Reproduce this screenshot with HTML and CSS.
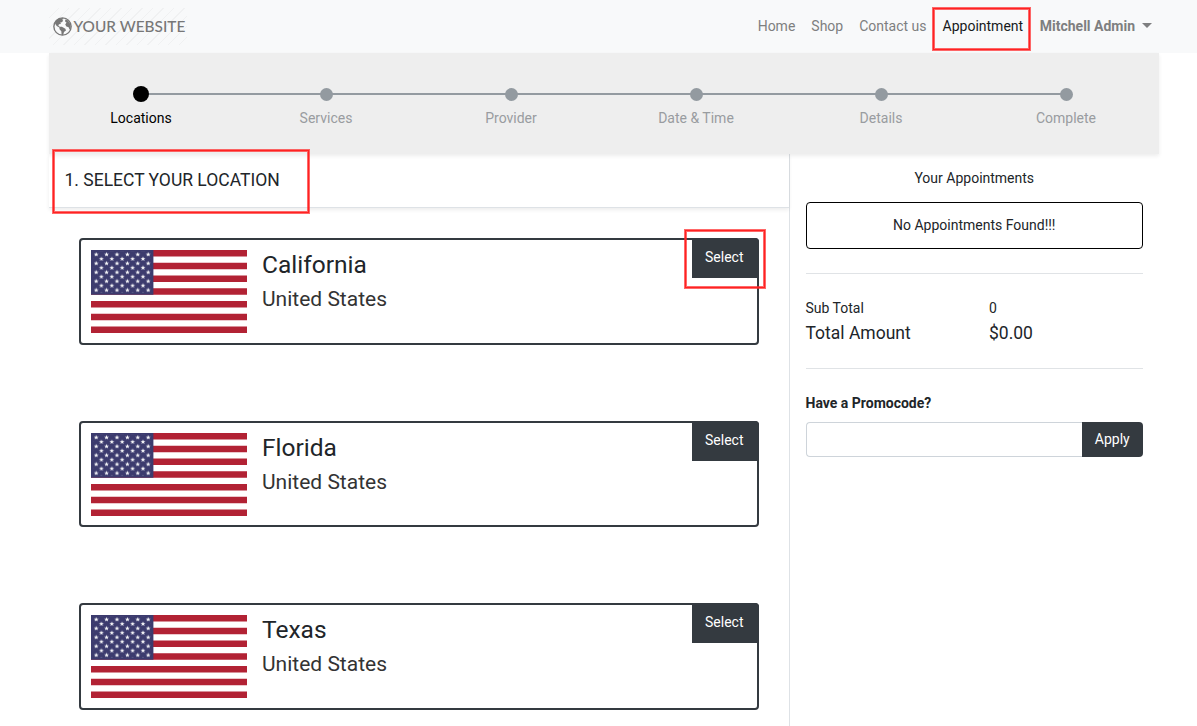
FILE: index.html
```
<!DOCTYPE html>
<html lang="en">
<head>
<meta charset="utf-8">
<title>Appointment | Your Website</title>
<link rel="stylesheet" href="styles.css">
</head>
<body>
<svg width="0" height="0" class="defs" aria-hidden="true">
  <defs>
    <path id="star" d="M0-2.5L.65-.8 2.4-.8 1 .35 1.5 2.1 0 1.05-1.5 2.1-1 .35-2.4-.8-.65-.8Z"/>
    <pattern id="stars" width="10.4" height="8.92" patternUnits="userSpaceOnUse">
      <use href="#star" x="5.2" y="4.46"/>
      <use href="#star" x="0" y="0"/><use href="#star" x="10.4" y="0"/>
      <use href="#star" x="0" y="8.92"/><use href="#star" x="10.4" y="8.92"/>
    </pattern>
    <symbol id="flag" viewBox="0 0 156 83" preserveAspectRatio="none">
      <path fill="#fff" d="M0 0h156v83H0z"/>
      <path stroke="#b22234" stroke-width="6.38" d="M0 3.19h156M0 15.96h156M0 28.73h156M0 41.5h156M0 54.27h156M0 67.04h156M0 79.81h156"/>
      <path fill="#3c3b6e" d="M0 0h62.4v44.69H0z"/>
      <rect x="2.6" y="1.9" width="57.2" height="40.8" fill="url(#stars)"/>
    </symbol>
  </defs>
</svg>
<header class="navbar">
  <div class="container navbar-inner">
    <a class="logo">
      <svg class="globe" viewBox="0 0 18 18"><circle cx="9" cy="9" r="8.2" fill="#f8f9fa" stroke="#777" stroke-width="1.3"/><path fill="#777" d="M2 4.3L5 1.6 9 .9 10 2 8.6 2.5 9.7 3.5 8.3 5 6.9 5.3 7.5 6.6 5.6 6.9 5.1 8.3 6.5 9.2 8.4 9.2 11.7 11.1 12.3 12.8 10.4 14.2 9.7 16.8 8.2 17.2 7.9 13.6 6.2 11.6 6 9.9 3.5 8.6 2 6.3ZM11.5 2.3L14 3 16 6 16.8 9.5 15.7 12 14.8 9.8 12.7 9.1 11.6 7.2 12.8 5.3 11.6 4.5Z"/></svg>
      <span>YOUR WEBSITE</span>
    </a>
    <nav class="nav">
      <a>Home</a><a>Shop</a><a>Contact us</a><a class="active">Appointment</a><a class="user">Mitchell Admin<i class="caret"></i></a>
    </nav>
  </div>
</header>
<main class="container">
  <ol class="steps">
    <li class="current"><i></i>Locations</li>
    <li><i></i>Services</li>
    <li><i></i>Provider</li>
    <li><i></i>Date &amp; Time</li>
    <li><i></i>Details</li>
    <li><i></i>Complete</li>
  </ol>
  <div class="columns">
    <section class="locations">
      <h1 class="section-title">1. SELECT YOUR LOCATION</h1>
      <div class="cards">
        <article class="card"><svg class="flag"><use href="#flag"/></svg><div class="place"><h2>California</h2><p>United States</p></div><button class="select">Select</button></article>
        <article class="card"><svg class="flag"><use href="#flag"/></svg><div class="place"><h2>Florida</h2><p>United States</p></div><button class="select">Select</button></article>
        <article class="card"><svg class="flag"><use href="#flag"/></svg><div class="place"><h2>Texas</h2><p>United States</p></div><button class="select">Select</button></article>
      </div>
    </section>
    <aside class="summary">
      <h3>Your Appointments</h3>
      <div class="empty">No Appointments Found!!!</div>
      <div class="totals">
        <span>Sub Total</span><span>0</span>
        <span class="total">Total Amount</span><span class="total">$0.00</span>
      </div>
      <label class="promo-label" for="promo">Have a Promocode?</label>
      <div class="promo"><input id="promo" type="text"><button>Apply</button></div>
    </aside>
  </div>
</main>
<div class="highlight highlight-nav"></div>
<div class="highlight highlight-title"></div>
<div class="highlight highlight-select"></div>
</body>
</html>
```
FILE: styles.css
```
* { box-sizing: border-box; }
html, body { height: 100%; }
body { margin: 0; overflow: hidden; background: #fff; color: #212529; font: 14px/21px Roboto, sans-serif; }
h1, h2, h3, p, ol { margin: 0; padding: 0; font-weight: 400; }
button, input { font: inherit; }
.defs { position: absolute; }
#star { fill: #fff; }
.container { width: 1110px; margin-left: 48.5px; }

.navbar { height: 53px; background: #f8f9fa; }
.navbar-inner { height: 53px; display: flex; justify-content: space-between; align-items: center; }
.logo { display: flex; align-items: center; width: 138px; height: 37px; padding: 0 0 1px 4.5px; color: #777; font: 15.4px/20px Lato, sans-serif; white-space: nowrap; background: repeating-linear-gradient(135deg, transparent 0 6.4px, #f0f1f2 6.4px 7.4px); }
.logo span { font-weight: 500; }
.globe { width: 19px; height: 19px; margin-right: 1.5px; flex: none; }
.nav { display: flex; gap: 16px; padding-right: 7px; color: #7e7f80; }
.nav .active { color: #17191b; }
.nav .user { font-weight: 700; display: flex; align-items: center; margin-left: .6px; }
.caret { margin: -2px 0 0 6.5px; border: solid transparent; border-top-color: #7e7f80; border-width: 5px 5px 0; }

.steps { position: relative; z-index: 1; display: flex; height: 101px; padding-top: 33px; list-style: none; background: linear-gradient(#939aa0, #939aa0) 92px 40px / 925px 2px no-repeat #eee; box-shadow: 0 2px 4px rgba(0,0,0,.075); color: #999ca0; }
.steps li { width: 185px; display: flex; flex-direction: column; align-items: center; }
.steps i { width: 13px; height: 13px; margin: 2px 0 7px; border-radius: 50%; background: #939aa0; }
.steps .current { color: #000; }
.steps .current i { width: 16px; height: 16px; margin: 0 0 6px; background: #000; }

.columns { display: flex; height: 572px; }
.locations { width: 741px; border-right: 1px solid #dee2e6; }
.section-title { height: 54px; padding: 15px 16px; border-bottom: 1px solid #dee2e6; box-shadow: 0 2px 4px rgba(0,0,0,.075); font-size: 17.5px; line-height: 22px; }
.cards { display: flex; flex-direction: column; gap: 76px; padding: 30px 30px 0 30.5px; }
.card { display: flex; height: 106.5px; border: 2px solid #343a40; border-radius: 4px; padding: 10px 0 0 10px; background: #fff; }
.flag { width: 156px; height: 83px; flex: none; }
.place { flex: 1; padding-left: 15px; }
.place h2 { font-size: 24.5px; line-height: 29px; }
.place p { margin-top: 8px; font-size: 21px; line-height: 25px; color: #333; }
.select { width: 67px; height: 40px; margin: -12px -2px 0 0; padding: 0 1.5px 1px 0; border: 0; border-top-right-radius: 4px; background: #343a40; color: #fff; }

.summary { width: 369px; padding: 14px 15.5px 14px 16px; }
.summary h3 { text-align: center; font-size: 14px; line-height: 21px; }
.empty { height: 47px; margin-top: 13px; border: 1px solid #000; border-radius: 4px; text-align: center; line-height: 45px; }
.totals { display: grid; grid-template-columns: 183.5px 1fr; align-content: start; height: 96px; margin-top: 24px; padding-top: 24px; border: solid #e0e3e6; border-width: 1px 0; }
.totals .total { font-size: 17.5px; line-height: 28px; }
.promo-label { display: block; margin-top: 24px; font-weight: 700; }
.promo { display: flex; height: 35px; margin-top: 8px; }
.promo input { flex: 1; min-width: 0; border: 1px solid #ced4da; border-right: 0; border-radius: 4px 0 0 4px; }
.promo button { width: 61px; padding: 0 .5px 0 0; border: 0; border-radius: 0 4px 4px 0; background: #343a40; color: #fff; }

.highlight { position: absolute; z-index: 2; border: 1px solid #f22; box-shadow: 0 0 0 1px rgba(255,40,40,.7), inset 0 0 0 1px rgba(255,40,40,.7); }
.highlight-nav { left: 933px; top: 8px; width: 97px; height: 42px; }
.highlight-title { left: 53px; top: 150px; width: 256px; height: 63px; }
.highlight-select { left: 685px; top: 230px; width: 80px; height: 58px; }
```
